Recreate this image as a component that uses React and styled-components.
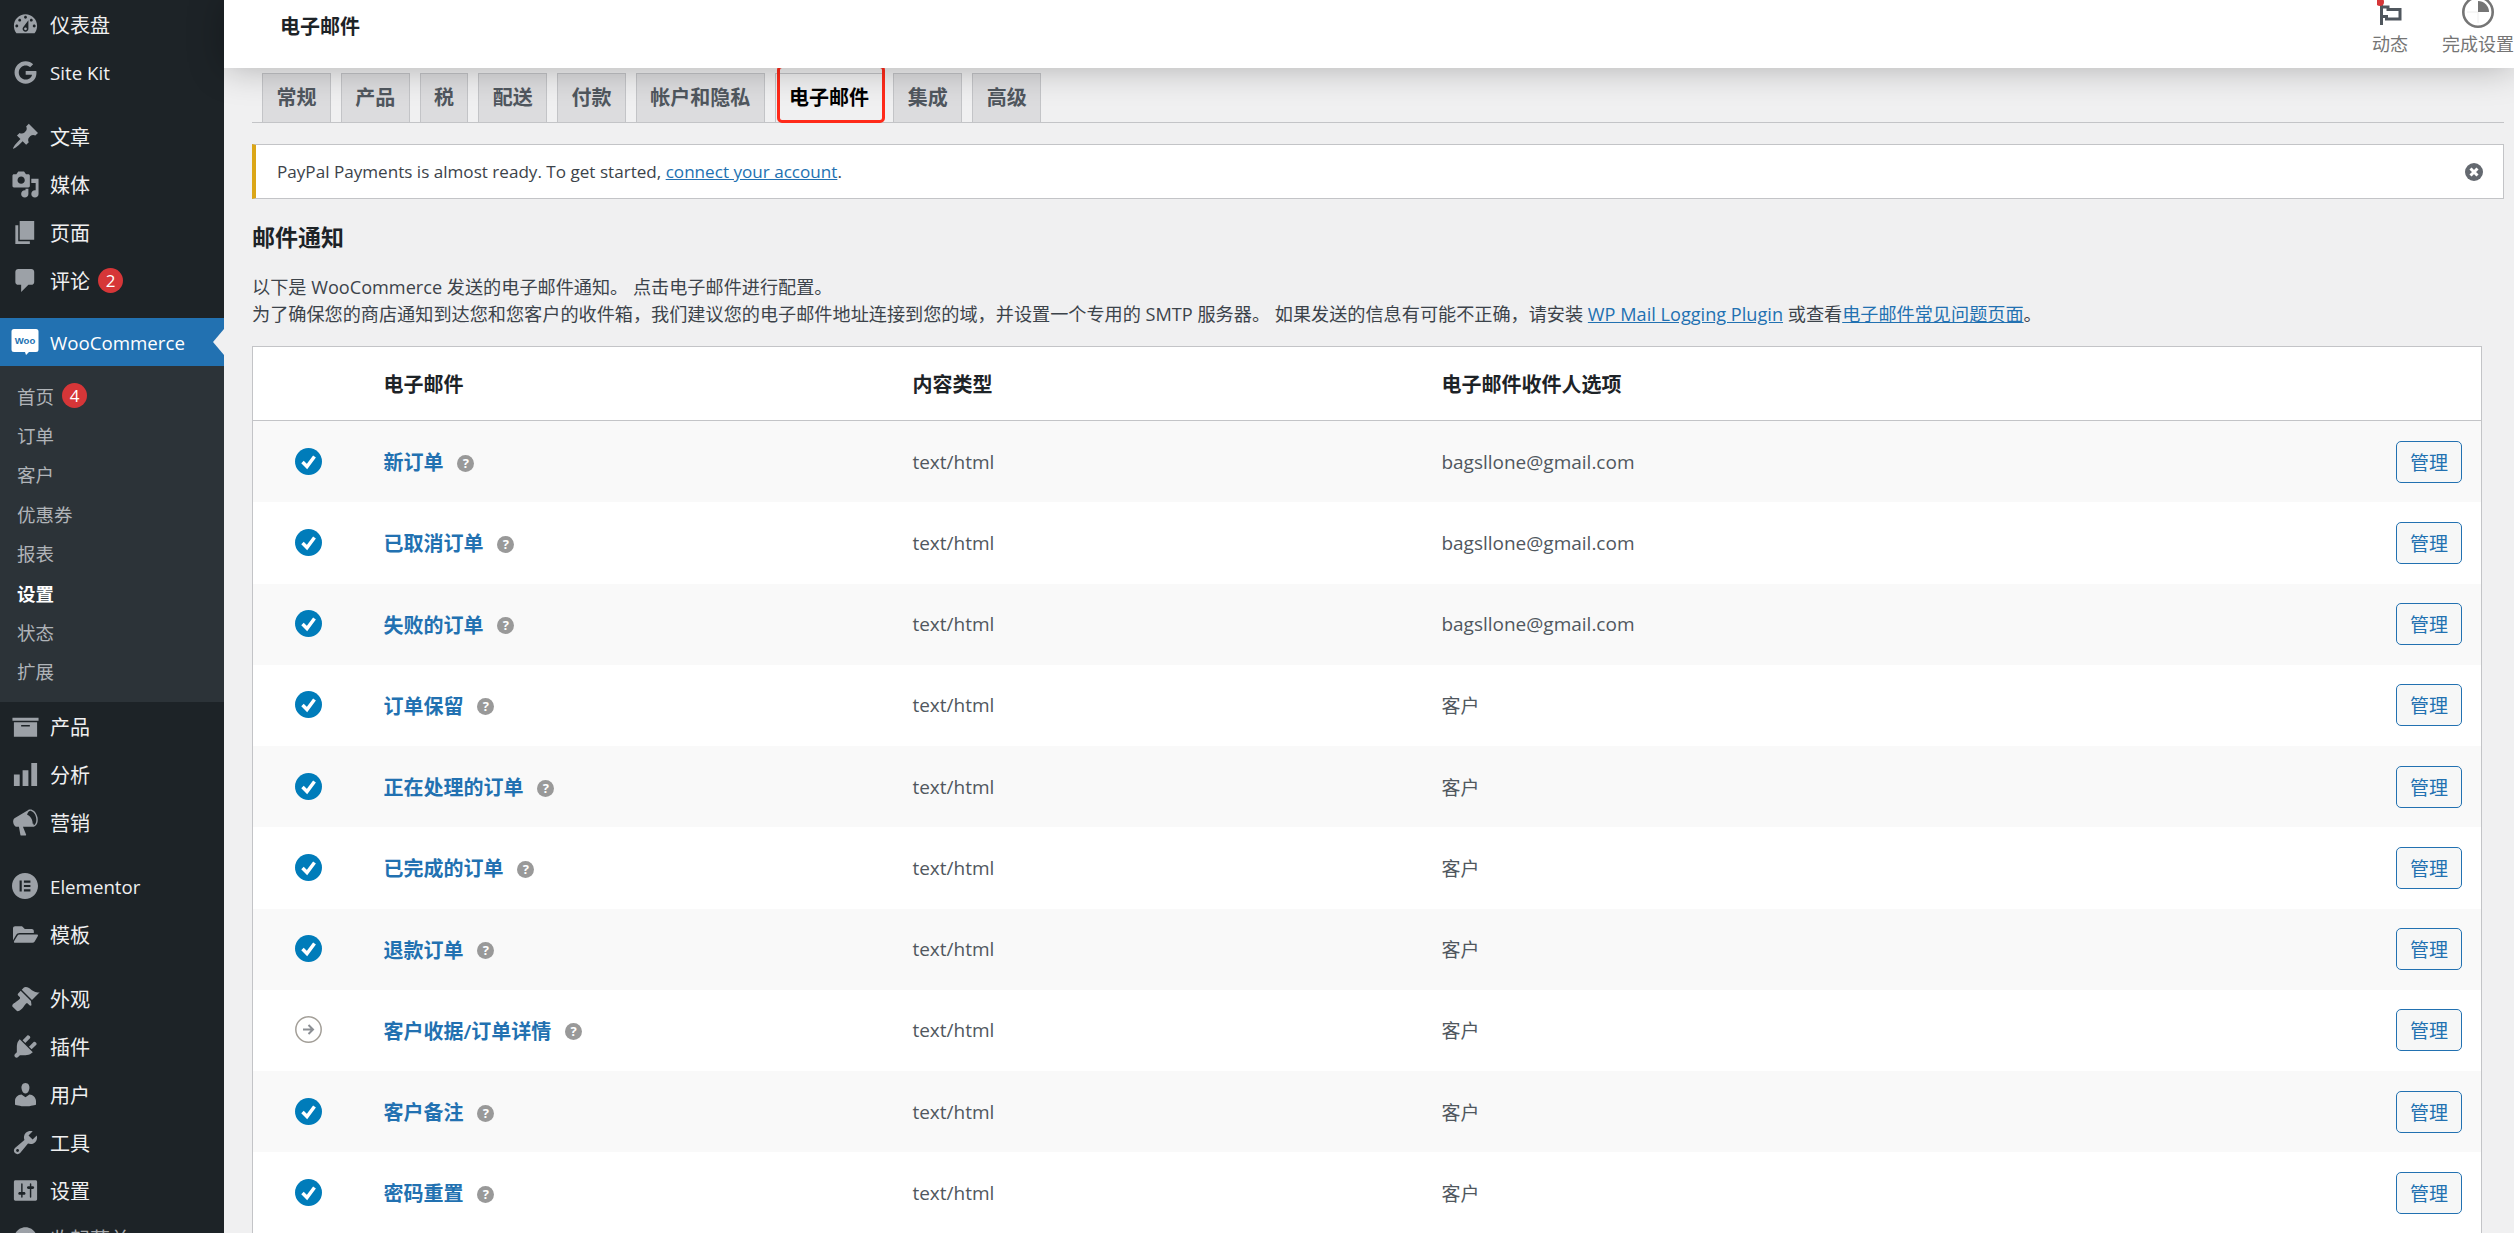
import styled, { createGlobalStyle } from "styled-components";
import { FaGoogle, FaFolderOpen } from "react-icons/fa";
import { SiElementor } from "react-icons/si";

const GlobalStyle = createGlobalStyle`
  html, body {
    margin: 0;
    height: 100%;
    overflow: hidden;
    background: #f0f0f1;
    font-family: "Open Sans", "Noto Sans CJK SC", sans-serif;
    font-size: 20px;
    color: #3c434a;
  }
  * { box-sizing: border-box; }
`;

const dashicons = {
  dashboard:
    "M3.76 16h12.48c1.1-1.37 1.76-3.11 1.76-5 0-4.42-3.58-8-8-8s-8 3.58-8 8c0 1.89.66 3.63 1.76 5zM10 4c.55 0 1 .45 1 1s-.45 1-1 1-1-.45-1-1 .45-1 1-1zM6 6c.55 0 1 .45 1 1s-.45 1-1 1-1-.45-1-1 .45-1 1-1zm8 0c.55 0 1 .45 1 1s-.45 1-1 1-1-.45-1-1 .45-1 1-1zm-5.37 5.55L12 7v6c0 1.1-.9 2-2 2s-2-.9-2-2c0-.57.24-1.08.63-1.45zM4 10c.55 0 1 .45 1 1s-.45 1-1 1-1-.45-1-1 .45-1 1-1zm12 0c.55 0 1 .45 1 1s-.45 1-1 1-1-.45-1-1 .45-1 1-1zm-5 3c0-.55-.45-1-1-1s-1 .45-1 1 .45 1 1 1 1-.45 1-1z",
  pin: "M10.44 3.02l1.82-1.82 6.36 6.35-1.83 1.82c-1.05-.68-2.48-.57-3.41.36l-.75.75c-.92.93-1.04 2.35-.35 3.41l-1.83 1.82-2.41-2.41-2.8 2.79c-.42.42-3.38 2.71-3.8 2.29s1.86-3.39 2.28-3.81l2.79-2.79L4.1 9.36l1.83-1.82c1.05.69 2.48.57 3.4-.36l.75-.75c.93-.92 1.05-2.35.36-3.41z",
  media:
    "M13 11V4c0-.55-.45-1-1-1h-1.67L9 1H5L3.67 3H2c-.55 0-1 .45-1 1v7c0 .55.45 1 1 1h10c.55 0 1-.45 1-1zM7 4.5c1.38 0 2.5 1.12 2.5 2.5S8.38 9.5 7 9.5 4.5 8.38 4.5 7 5.62 4.5 7 4.5zM14 6h5v10.5c0 1.38-1.12 2.5-2.5 2.5S14 17.88 14 16.5s1.12-2.5 2.5-2.5c.17 0 .34.02.5.05V9h-3V6zm-4 8.05V13h2v3.5c0 1.38-1.12 2.5-2.5 2.5S7 17.88 7 16.5 8.12 14 9.5 14c.17 0 .34.02.5.05z",
  page: "M6 15V2h10v13H6zm-1 1h8v2H3V5h2v11z",
  comments:
    "M5 2h9c1.1 0 2 .9 2 2v7c0 1.1-.9 2-2 2h-2l-5 5v-5H5c-1.1 0-2-.9-2-2V4c0-1.1.9-2 2-2z",
  archive: "M19 4v2H1V4h18zM2 7h16v10H2V7zm11 3V9H7v1h6z",
  chart: "M18 18V2h-4v16h4zm-6 0V7H8v11h4zm-6 0v-8H2v8h4z",
  megaphone:
    "M18.15 5.94c.46 1.62.38 3.22-.02 4.48-.42 1.28-1.26 2.18-2.3 2.48-.16.06-.26.06-.4.06-.06.02-.12.02-.18.02-.06.02-.14.02-.22.02H8.24l2.22 5.5c.02.14-.06.26-.14.34-.08.1-.24.16-.34.16H6.95c-.1 0-.26-.06-.34-.16-.08-.08-.16-.2-.14-.34l-1-5.5H4.25l-.02-.02c-.5.06-1.08-.18-1.54-.62s-.88-1.08-1.06-1.88c-.24-.8-.2-1.56-.02-2.2.18-.62.58-1.08 1.06-1.3l.02-.02 9-5.4c.1-.06.18-.1.24-.16.06-.04.14-.08.24-.12.16-.08.28-.12.5-.18 1.04-.3 2.24.1 3.22 1 .98.88 1.8 2.24 2.26 3.86zm-2.58 5.98c.4-.1.74-.34 1.04-.7.58-.7.86-1.76.86-3.04-.02-.64-.1-1.3-.28-1.98-.34-1.36-1.02-2.5-1.78-3.24-.24-.24-.5-.44-.76-.6-.28-.16-.56-.28-.82-.36-.28-.06-.58-.06-.88.02-.34.08-.64.26-.9.52-.52.52-.82 1.28-.94 2.2 1.06.32 2.06 1.2 2.8 2.4.72 1.2 1.06 2.5 1 3.58.04.04.1.06.14.08.18.08.36.14.54.12z",
  appearance:
    "M14.48 11.06L7.41 3.99l1.5-1.5c.5-.56 2.3-.47 3.51.32 1.21.8 1.43 1.28 2.91 2.1 1.18.64 2.45 1.26 4.45.85zm-.71.71L6.7 4.7 4.93 6.47c-.39.39-.39 1.02 0 1.41l1.06 1.06c.39.39.39 1.03 0 1.42-.6.6-1.43 1.11-2.21 1.69-.35.26-.7.53-1.01.84C1.43 13.23.4 14.98 1.1 15.68l2.84 2.84c.7.7 2.45-.33 3.79-1.67.31-.31.58-.66.84-1.01.58-.78 1.09-1.61 1.69-2.21.39-.39 1.03-.39 1.42 0l1.06 1.06c.39.39 1.02.39 1.41 0z",
  plugins:
    "M13.11 4.36L9.87 7.6 8 5.73l3.24-3.24c.35-.34 1.05-.2 1.56.32.52.51.66 1.21.31 1.55zm-8 1.77l.91-1.12 9.01 9.01-1.19.84c-.71.71-2.63 1.16-3.82 1.16H6.14L4.9 17.26c-.59.59-1.54.59-2.12 0-.59-.58-.59-1.53 0-2.12l1.24-1.24v-3.88c0-1.13.4-3.19 1.09-3.89zm7.26 3.97l3.24-3.24c.34-.35 1.04-.21 1.55.31.52.51.66 1.21.31 1.55l-3.24 3.25z",
  users:
    "M10 9.25c-2.27 0-2.73-3.44-2.73-3.44C7 4.02 7.82 2 9.97 2c2.16 0 2.98 2.02 2.71 3.81 0 0-.41 3.44-2.68 3.44zm0 2.57L12.72 10c2.39 0 4.52 2.33 4.52 4.53v2.49s-3.65 1.13-7.24 1.13c-3.65 0-7.24-1.13-7.24-1.13v-2.49c0-2.25 1.94-4.48 4.47-4.48z",
  tools:
    "M16.68 9.77c-1.34 1.34-3.3 1.67-4.95.99l-5.41 6.52c-.99.99-2.59.99-3.58 0s-.99-2.59 0-3.57l6.52-5.42c-.68-1.65-.35-3.61.99-4.95 1.28-1.28 3.12-1.62 4.72-1.06l-2.89 2.89 2.82 2.82 2.86-2.87c.53 1.58.18 3.39-1.08 4.65zM3.81 16.21c.4.39 1.04.39 1.43 0 .4-.4.4-1.04 0-1.43-.39-.4-1.03-.4-1.43 0-.39.39-.39 1.03 0 1.43z",
  settings:
    "M18 16V4c0-.55-.45-1-1-1H3c-.55 0-1 .45-1 1v12c0 .55.45 1 1 1h14c.55 0 1-.45 1-1zM8 11h1c.55 0 1 .45 1 1s-.45 1-1 1H8v1.5c0 .28-.22.5-.5.5s-.5-.22-.5-.5V13H6c-.55 0-1-.45-1-1s.45-1 1-1h1V5.5c0-.28.22-.5.5-.5s.5.22.5.5V11zm5-2h-1c-.55 0-1-.45-1-1s.45-1 1-1h1V5.5c0-.28.22-.5.5-.5s.5.22.5.5V7h1c.55 0 1 .45 1 1s-.45 1-1 1h-1v5.5c0 .28-.22.5-.5.5s-.5-.22-.5-.5V9z",
  collapse:
    "M10 2.16c4.33 0 7.84 3.51 7.84 7.84s-3.51 7.84-7.84 7.84S2.16 14.33 2.16 10 5.71 2.16 10 2.16zm2 11.72V6.12L6.18 9.97z",
};

const Dash = ({ name }) => (
  <svg viewBox="0 0 20 20" width="29" height="29" fill="currentColor">
    <path d={dashicons[name]} />
  </svg>
);

const WooLogo = () => (
  <svg viewBox="0 0 28 28" width="28" height="28">
    <path
      d="M3 1h22a2.5 2.5 0 0 1 2.5 2.5v18A2.5 2.5 0 0 1 25 24h-7l-3 3-1-3H3a2.500 2.500 0 0 1-2.500-2.500v-18A2.500 2.500 0 0 1 3 1z"
      fill="#fff"
    />
    <text
      x="14"
      y="16"
      textAnchor="middle"
      fontFamily="Liberation Sans, sans-serif"
      fontWeight="700"
      fontSize="9.500"
      fill="#2271b1"
    >
      Woo
    </text>
  </svg>
);

const menuTop = [
  { key: "dash", icon: <Dash name="dashboard" />, label: "仪表盘" },
  { key: "kit", icon: <FaGoogle size={23} />, label: "Site Kit", latin: true },
];
const menuContent = [
  { key: "posts", icon: <Dash name="pin" />, label: "文章" },
  { key: "media", icon: <Dash name="media" />, label: "媒体" },
  { key: "pages", icon: <Dash name="page" />, label: "页面" },
  { key: "comments", icon: <Dash name="comments" />, label: "评论", badge: 2 },
];
const subMenu = [
  { label: "首页", badge: 4 },
  { label: "订单" },
  { label: "客户" },
  { label: "优惠券" },
  { label: "报表" },
  { label: "设置", current: true },
  { label: "状态" },
  { label: "扩展" },
];
const menuShop = [
  { key: "products", icon: <Dash name="archive" />, label: "产品" },
  { key: "analytics", icon: <Dash name="chart" />, label: "分析" },
  { key: "marketing", icon: <Dash name="megaphone" />, label: "营销" },
];
const menuBuilder = [
  { key: "elementor", icon: <SiElementor size={26} />, label: "Elementor", latin: true },
  { key: "templates", icon: <FaFolderOpen size={25} />, label: "模板" },
];
const menuSite = [
  { key: "appearance", icon: <Dash name="appearance" />, label: "外观" },
  { key: "plugins", icon: <Dash name="plugins" />, label: "插件" },
  { key: "users", icon: <Dash name="users" />, label: "用户" },
  { key: "tools", icon: <Dash name="tools" />, label: "工具" },
  { key: "settings", icon: <Dash name="settings" />, label: "设置" },
];

const tabs = ["常规", "产品", "税", "配送", "付款", "帐户和隐私", "电子邮件", "集成", "高级"];

const emails = [
  { name: "新订单", to: "bagsllone@gmail.com" },
  { name: "已取消订单", to: "bagsllone@gmail.com" },
  { name: "失败的订单", to: "bagsllone@gmail.com" },
  { name: "订单保留", to: "客户" },
  { name: "正在处理的订单", to: "客户" },
  { name: "已完成的订单", to: "客户" },
  { name: "退款订单", to: "客户" },
  { name: "客户收据/订单详情", to: "客户", manual: true },
  { name: "客户备注", to: "客户" },
  { name: "密码重置", to: "客户" },
];

function MenuList({ items }) {
  return items.map((item) => (
    <MenuItem key={item.key}>
      <MenuIcon>{item.icon}</MenuIcon>
      <MenuLabel $latin={item.latin}>{item.label}</MenuLabel>
      {item.badge && <Badge>{item.badge}</Badge>}
    </MenuItem>
  ));
}

export default function App() {
  return (
    <>
      <GlobalStyle />
      <Shell>
        <Sidebar>
          <MenuList items={menuTop} />
          <Separator />
          <MenuList items={menuContent} />
          <WooItem>
            <MenuIcon>
              <WooLogo />
            </MenuIcon>
            <MenuLabel $latin>WooCommerce</MenuLabel>
            <ActiveArrow />
          </WooItem>
          <SubMenu>
            {subMenu.map((s) => (
              <SubItem key={s.label} $current={s.current}>
                <span>{s.label}</span>
                {s.badge && <Badge>{s.badge}</Badge>}
              </SubItem>
            ))}
          </SubMenu>
          <MenuList items={menuShop} />
          <Separator />
          <MenuList items={menuBuilder} />
          <Separator />
          <MenuList items={menuSite} />
          <CollapseItem>
            <MenuIcon>
              <Dash name="collapse" />
            </MenuIcon>
            <span>收起菜单</span>
          </CollapseItem>
        </Sidebar>

        <Main>
          <TopBar>
            <PageTitle>电子邮件</PageTitle>
            <TopActions>
              <TopAction>
                <ActionGlyph>
                  <svg viewBox="0 0 26 30" width="26" height="30" fill="none">
                    <path
                      d="M4.500 6v21M4.500 9H11v2.500h12V21H9.500v-2.500h-5"
                      stroke="#50575e"
                      strokeWidth="3"
                    />
                    <circle cx="3" cy="4" r="4" fill="#d63638" />
                  </svg>
                </ActionGlyph>
                <span>动态</span>
              </TopAction>
              <TopAction>
                <ActionGlyph>
                  <svg viewBox="0 0 32 32" width="32" height="32" fill="none">
                    <circle cx="16" cy="16" r="14.700" stroke="#757575" strokeWidth="2.600" fill="#fff" />
                    <path d="M16 5a11 11 0 0 1 11 11H16z" fill="#757575" />
                    <path d="M16 16v11M5 16h11" stroke="#eee" strokeWidth="1" />
                  </svg>
                </ActionGlyph>
                <span>完成设置</span>
              </TopAction>
            </TopActions>
          </TopBar>

          <Content>
            <TabBar>
              {tabs.map((t) => (
                <Tab key={t} $active={t === "电子邮件"}>
                  {t}
                </Tab>
              ))}
            </TabBar>

            <Notice>
              <span>
                PayPal Payments is almost ready. To get started, <A>connect your account</A>.
              </span>
              <svg viewBox="0 0 20 20" width="20" height="20">
                <circle cx="10" cy="10" r="9" fill="#646970" />
                <path d="M6.500 6.500l7 7M13.500 6.500l-7 7" stroke="#fff" strokeWidth="3" />
              </svg>
            </Notice>

            <Heading>邮件通知</Heading>
            <Intro>
              以下是 WooCommerce 发送的电子邮件通知。 点击电子邮件进行配置。
              <br />
              为了确保您的商店通知到达您和您客户的收件箱，我们建议您的电子邮件地址连接到您的域，并设置一个专用的 SMTP 服务器。 如果发送的信息有可能不正确，请安装 <A>WP Mail Logging Plugin</A> 或查看<A>电子邮件常见问题页面</A>。
            </Intro>

            <EmailTable>
              <HeadRow>
                <span />
                <span>电子邮件</span>
                <span>内容类型</span>
                <span>电子邮件收件人选项</span>
              </HeadRow>
              {emails.map((e) => (
                <EmailRow key={e.name}>
                  <StatusCell>
                    {e.manual ? (
                      <svg viewBox="0 0 27 27" width="27" height="27" fill="none">
                        <circle cx="13.500" cy="13.500" r="12.700" stroke="#a39f98" strokeWidth="1.500" />
                        <path d="M8 13.500h10M13.500 9l4.500 4.500-4.500 4.500" stroke="#8c8f94" strokeWidth="2" />
                      </svg>
                    ) : (
                      <svg viewBox="0 0 27 27" width="27" height="27" fill="none">
                        <circle cx="13.500" cy="13.500" r="13.500" fill="#007cba" />
                        <path d="M7.500 14l4.500 4.500 7.500-10" stroke="#fff" strokeWidth="3.500" />
                      </svg>
                    )}
                  </StatusCell>
                  <NameCell>
                    <EmailName>{e.name}</EmailName>
                    <HelpTip>?</HelpTip>
                  </NameCell>
                  <span>text/html</span>
                  <span>{e.to}</span>
                  <ManageCell>
                    <ManageButton>管理</ManageButton>
                  </ManageCell>
                </EmailRow>
              ))}
            </EmailTable>
          </Content>
        </Main>
      </Shell>
    </>
  );
}

const Shell = styled.div`
  display: flex;
  height: 100vh;
  overflow: hidden;
`;

const Sidebar = styled.nav`
  width: 224px;
  flex: none;
  background: #1d2327;
  color: #f0f0f1;
  overflow: hidden;
`;

const MenuItem = styled.div`
  position: relative;
  display: flex;
  align-items: center;
  height: 48px;
`;

const MenuIcon = styled.span`
  flex: none;
  width: 50px;
  display: flex;
  justify-content: center;
  color: #9ca1a7;
`;

const MenuLabel = styled.span`
  font-size: ${(p) => (p.$latin ? "18.700px" : "20px")};
`;

const Separator = styled.div`
  height: 16px;
`;

const Badge = styled.span`
  width: 25px;
  height: 25px;
  margin-left: 8px;
  border-radius: 50%;
  background: #d63638;
  color: #fff;
  font-size: 17px;
  display: flex;
  align-items: center;
  justify-content: center;
`;

const WooItem = styled(MenuItem)`
  margin-top: 14px;
  background: #2271b1;
  color: #fff;
`;

const ActiveArrow = styled.i`
  position: absolute;
  right: 0;
  top: 50%;
  margin-top: -13px;
  border: 13px solid transparent;
  border-left-width: 0;
  border-right: 11px solid #f0f0f1;
`;

const SubMenu = styled.div`
  background: #2c3338;
  padding: 10px 0 11px 17px;
`;

const SubItem = styled.div`
  display: flex;
  align-items: center;
  height: 39.400px;
  font-size: 18.500px;
  color: ${(p) => (p.$current ? "#fff" : "#b0b4b8")};
  font-weight: ${(p) => (p.$current ? 700 : 400)};
`;

const CollapseItem = styled(MenuItem)`
  color: #a7aaad;
`;

const Main = styled.div`
  flex: 1;
  min-width: 0;
  display: flex;
  flex-direction: column;
`;

const TopBar = styled.header`
  position: relative;
  z-index: 2;
  flex: none;
  height: 68px;
  background: #fff;
  box-shadow: 0 0 36px rgba(0, 0, 0, 0.28);
  display: flex;
  justify-content: space-between;
  padding-left: 56px;
`;

const PageTitle = styled.h1`
  margin: 12px 0 0;
  font-size: 20px;
  line-height: 30px;
  font-weight: 600;
  color: #1d2327;
`;

const TopActions = styled.div`
  display: flex;
  gap: 34px;
  height: 68px;
  overflow: hidden;
`;

const TopAction = styled.div`
  display: flex;
  flex-direction: column;
  align-items: center;
  justify-content: flex-end;
  padding-bottom: 11px;
  font-size: 18px;
  line-height: 26px;
  color: #757575;
  white-space: nowrap;
`;

const ActionGlyph = styled.span`
  display: flex;
  height: 28px;
  align-items: flex-end;
  margin-bottom: 3px;
`;

const Content = styled.main`
  flex: 1;
  padding: 5px 10px 0 28px;
`;

const TabBar = styled.div`
  display: flex;
  gap: 10px;
  padding-left: 10px;
  border-bottom: 1.600px solid #c3c4c7;
`;

const Tab = styled.div`
  position: relative;
  padding: 0 13.400px;
  height: 49px;
  line-height: 47px;
  font-weight: 600;
  font-size: 20px;
  color: ${(p) => (p.$active ? "#000" : "#50575e")};
  background: ${(p) => (p.$active ? "#f0f0f1" : "#dcdcde")};
  border: 1.600px solid #c3c4c7;
  border-bottom: 0;
  ${(p) =>
    p.$active &&
    `
    &::after {
      content: "";
      position: absolute;
      inset: -9px -3px -1px 1px;
      border: 3.500px solid #ff2a1a;
      border-radius: 5px;
    }
  `}
`;

const A = styled.a`
  color: #2271b1;
  text-decoration: underline;
`;

const Notice = styled.div`
  margin-top: 21px;
  height: 55px;
  display: flex;
  align-items: center;
  justify-content: space-between;
  padding: 0 19px 0 21px;
  background: #fff;
  border: 1.600px solid #c3c4c7;
  border-left: 4px solid #dba617;
  font-size: 17.100px;
  color: #3c434a;
`;

const Heading = styled.h2`
  margin: 21px 0 0;
  font-size: 23px;
  line-height: 34px;
  font-weight: 700;
  color: #1d2327;
`;

const Intro = styled.p`
  margin: 20px 0 0;
  font-size: 18.150px;
  line-height: 27px;
  color: #3c434a;
`;

const EmailTable = styled.section`
  margin: 18px 22px 0 0;
  background: #fff;
  border: 1.600px solid #c3c4c7;
  border-bottom: 0;
`;

const HeadRow = styled.div`
  display: grid;
  grid-template-columns: 130.400px 529px 529px 1fr;
  align-items: center;
  height: 74px;
  border-bottom: 1.600px solid #c3c4c7;
  font-weight: 600;
  font-size: 20px;
  color: #1d2327;
`;

const EmailRow = styled.div`
  display: grid;
  grid-template-columns: 130.400px 529px 529px 1fr auto;
  align-items: center;
  height: 81.250px;
  font-size: 19px;
  color: #50575e;
  &:nth-child(even) {
    background: #f9f9f9;
  }
`;

const StatusCell = styled.span`
  display: flex;
  padding-left: 42px;
  margin-top: -1px;
`;

const NameCell = styled.span`
  display: flex;
  align-items: center;
  gap: 14px;
`;

const EmailName = styled.span`
  font-size: 20px;
  font-weight: 600;
  color: #2271b1;
`;

const HelpTip = styled.span`
  width: 17px;
  height: 17px;
  margin-top: 3px;
  border-radius: 50%;
  background: #999;
  color: #fff;
  font-size: 13px;
  font-weight: 700;
  line-height: 17px;
  text-align: center;
`;

const ManageCell = styled.span`
  padding-right: 19px;
`;

const ManageButton = styled.button`
  display: block;
  width: 66px;
  height: 42px;
  padding: 0;
  border: 1.600px solid #2271b1;
  border-radius: 5px;
  background: #f6f7f7;
  color: #2271b1;
  font: inherit;
  font-size: 19px;
`;
